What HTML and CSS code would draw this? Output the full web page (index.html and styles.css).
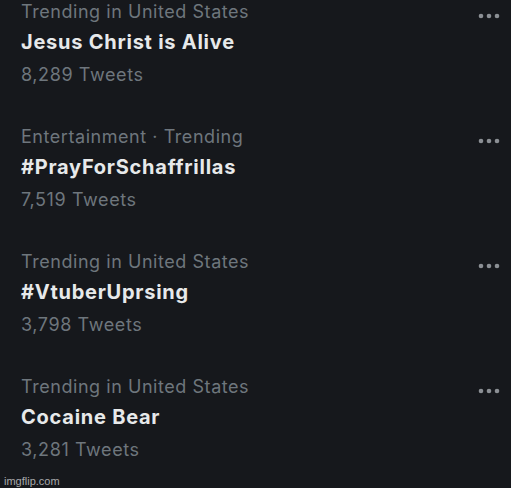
FILE: index.html
```html
<!DOCTYPE html>
<html>
<head>
<meta charset="utf-8">
<link rel="stylesheet" href="styles.css">
</head>
<body>
<div class="list">
  <div class="trend">
    <div class="info">
      <div class="meta">Trending in United States</div>
      <div class="title">Jesus Christ is Alive</div>
      <div class="count">8,289 Tweets</div>
    </div>
    <svg class="more" width="22" height="8" viewBox="0 0 22 8"><circle cx="3" cy="4" r="2.3"/><circle cx="11" cy="4" r="2.3"/><circle cx="19" cy="4" r="2.3"/></svg>
  </div>
  <div class="trend">
    <div class="info">
      <div class="meta">Entertainment · Trending</div>
      <div class="title">#PrayForSchaffrillas</div>
      <div class="count">7,519 Tweets</div>
    </div>
    <svg class="more" width="22" height="8" viewBox="0 0 22 8"><circle cx="3" cy="4" r="2.3"/><circle cx="11" cy="4" r="2.3"/><circle cx="19" cy="4" r="2.3"/></svg>
  </div>
  <div class="trend">
    <div class="info">
      <div class="meta">Trending in United States</div>
      <div class="title">#VtuberUprsing</div>
      <div class="count">3,798 Tweets</div>
    </div>
    <svg class="more" width="22" height="8" viewBox="0 0 22 8"><circle cx="3" cy="4" r="2.3"/><circle cx="11" cy="4" r="2.3"/><circle cx="19" cy="4" r="2.3"/></svg>
  </div>
  <div class="trend">
    <div class="info">
      <div class="meta">Trending in United States</div>
      <div class="title">Cocaine Bear</div>
      <div class="count">3,281 Tweets</div>
    </div>
    <svg class="more" width="22" height="8" viewBox="0 0 22 8"><circle cx="3" cy="4" r="2.3"/><circle cx="11" cy="4" r="2.3"/><circle cx="19" cy="4" r="2.3"/></svg>
  </div>
</div>
<div class="watermark">imgflip.com</div>
</body>
</html>
```
FILE: styles.css
```css
html, body {
  margin: 0;
  padding: 0;
  background: #16181c;
  width: 511px;
  height: 488px;
  overflow: hidden;
}
body {
  position: relative;
  font-family: Inter, "Open Sans", sans-serif;
}
.list {
  display: flex;
  flex-direction: column;
}
.trend {
  height: 125px;
  display: flex;
  justify-content: space-between;
  align-items: flex-start;
  padding: 0 11px 0 21px;
  box-sizing: border-box;
}
.info {
  display: flex;
  flex-direction: column;
}
.meta {
  color: #6e767d;
  font-size: 18px;
  line-height: 24px;
  letter-spacing: 0.55px;
}
.title {
  color: #e7e9ea;
  font-size: 20px;
  font-weight: 700;
  line-height: 32px;
  margin-top: 2px;
  letter-spacing: 0.75px;
}
.count {
  color: #6e767d;
  font-size: 18px;
  line-height: 32px;
  margin-top: 1px;
  letter-spacing: 0.6px;
}
.more {
  fill: #8b8f94;
  margin-top: 12px;
}
.watermark {
  position: absolute;
  left: 4px;
  bottom: 1px;
  font-family: "Liberation Sans", sans-serif;
  font-size: 11px;
  color: #a8a9ab;
}
```
